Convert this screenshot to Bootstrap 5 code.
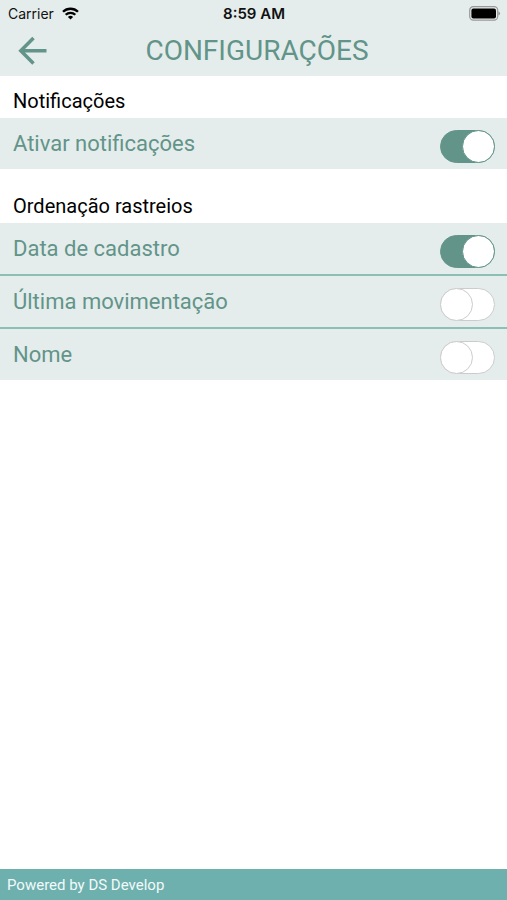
<!DOCTYPE html>
<html lang="pt-BR">
<head>
<meta charset="utf-8">
<meta name="viewport" content="width=device-width, initial-scale=1">
<title>Configurações</title>
<link href="https://cdn.jsdelivr.net/npm/bootstrap@5.3.0/dist/css/bootstrap.min.css" rel="stylesheet">
<style>
  :root { --ink: #629489; --pale: #e5edec; --line: #8dbfb5; --bar: #6eb0ae; }
  body { font-family: Roboto, sans-serif; color: #000; background: #fff; }
  .app-head { background: var(--pale); color: var(--ink); }
  .status { height: 27px; padding: 0 7px 0 8px; font: 15px/27px Inter, sans-serif; color: #111; }
  .status-side { flex: 1 1 0; }
  .carrier { font-size: 14px; }
  .status-time { font-weight: 600; font-size: 15px; }
  .title-bar { height: 49px; padding: 0 9px 0 16px; }
  .title-bar h1 { font-size: 28px; line-height: 48px; font-weight: 400; }
  .side-slot { width: 34px; }
  .back { color: var(--ink); line-height: 0; }
  .group-title { font-size: 20px; line-height: 24px; font-weight: 400; padding: 13px 13px 5px; }
  .setting { height: 51px; padding: 0 12px 0 13px; background: var(--pale); color: var(--ink); box-sizing: content-box; }
  .setting label { font-size: 22px; line-height: 52px; }
  .setting + .setting { border-top: 2px solid var(--line); }
  .toggle { appearance: none; width: 55px; height: 33px; margin: 12px 0 0; border: 1px solid #ccc; border-radius: 17px; background: #fff; display: flex; cursor: pointer; }
  .toggle::before { content: ""; width: 33px; height: 33px; margin: -1px; border: 1px solid #ccc; border-radius: 50%; background: #fff; }
  .toggle:checked { background: var(--ink); border-color: var(--ink); justify-content: flex-end; }
  .toggle:checked::before { border-color: var(--ink); }
  .app-foot { background: var(--bar); color: #f2fafa; font-size: 15px; line-height: 30px; padding: 1px 7px 0; }
</style>
</head>
<body class="d-flex flex-column min-vh-100">
<header class="app-head">
  <div class="status d-flex align-items-center">
    <div class="status-side d-flex align-items-center gap-2">
      <span class="carrier">Carrier</span>
      <svg width="17" height="13" viewBox="0 0 17 13" fill="none" stroke="#000" stroke-width="2.3" aria-hidden="true">
        <path d="M1 4.8a10.7 10.7 0 0 1 15 0M3.7 7.800a6.800 6.800 0 0 1 9.600 0"/>
        <path d="M8.5 12.6 5.9 10a3.7 3.7 0 0 1 5.2 0z" fill="#000" stroke="none"/>
      </svg>
    </div>
    <span class="status-time">8:59 AM</span>
    <div class="status-side d-flex justify-content-end">
      <svg width="32" height="15" viewBox="0 0 32 15" aria-hidden="true">
        <rect x="1.700" y=".7" width="28" height="13.4" rx="3.6" fill="none" stroke="#999" stroke-width="1.2"/>
        <rect x="3.400" y="2.4" width="24.600" height="10" rx="2" fill="#000"/>
        <path d="M30.5 5.2q1.4.8 1.4 2.2t-1.4 2.2z" fill="#888"/>
      </svg>
    </div>
  </div>
  <div class="title-bar d-flex align-items-start justify-content-between">
    <div class="side-slot pt-2">
      <button class="back btn p-0 border-0 d-block" type="button" aria-label="Voltar">
        <svg width="34" height="34" viewBox="0 0 34 34" fill="none" stroke="currentColor" stroke-width="3.5" aria-hidden="true"><path d="M30.5 15.700H5M17.500 3 4.800 15.700l12.700 12.700"/></svg>
      </button>
    </div>
    <h1 class="m-0">CONFIGURAÇÕES</h1>
    <div class="side-slot"></div>
  </div>
</header>
<main class="flex-grow-1">
  <section>
    <h2 class="group-title m-0">Notificações</h2>
    <div class="setting d-flex justify-content-between align-items-start">
      <label for="ativar">Ativar notificações</label>
      <input class="toggle" type="checkbox" role="switch" id="ativar" checked>
    </div>
  </section>
  <section class="pt-2">
    <h2 class="group-title mt-1 mb-0">Ordenação rastreios</h2>
    <div class="setting d-flex justify-content-between align-items-start">
      <label for="data">Data de cadastro</label>
      <input class="toggle" type="checkbox" role="switch" id="data" checked>
    </div>
    <div class="setting d-flex justify-content-between align-items-start">
      <label for="ultima">Última movimentação</label>
      <input class="toggle" type="checkbox" role="switch" id="ultima">
    </div>
    <div class="setting d-flex justify-content-between align-items-start">
      <label for="nome">Nome</label>
      <input class="toggle" type="checkbox" role="switch" id="nome">
    </div>
  </section>
</main>
<footer class="app-foot">Powered by DS Develop</footer>
</body>
</html>
